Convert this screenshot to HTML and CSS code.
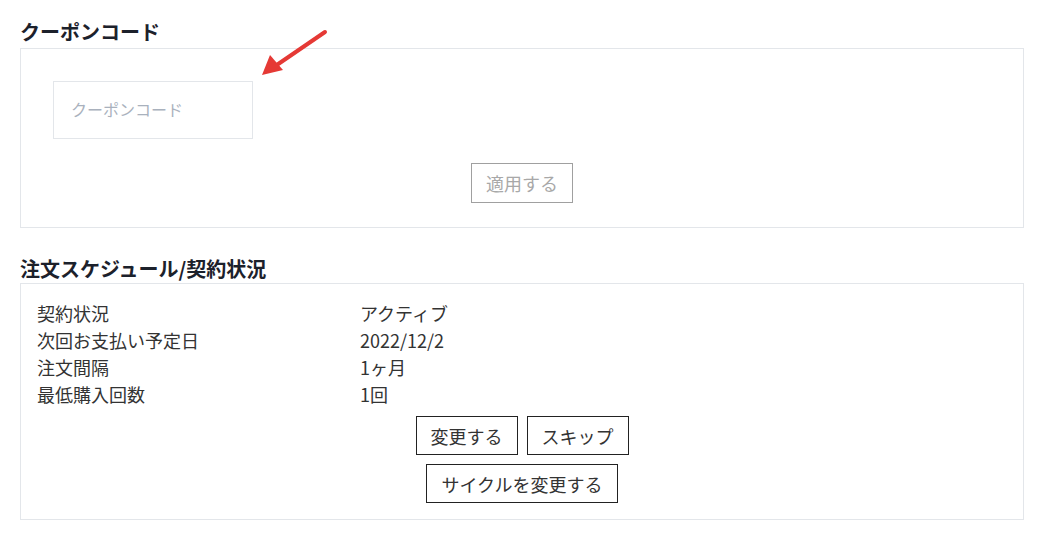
FILE: index.html
```html
<!DOCTYPE html>
<html lang="ja">
<head>
<meta charset="utf-8">
<link rel="stylesheet" href="styles.css">
</head>
<body>
<div class="page">
  <h2 class="title">クーポンコード</h2>
  <div class="box coupon">
    <input class="coupon-input" type="text" placeholder="クーポンコード">
    <div class="center">
      <button class="btn btn-disabled">適用する</button>
    </div>
  </div>

  <h2 class="title title-2">注文スケジュール/契約状況</h2>
  <div class="box schedule">
    <div class="rows">
      <div class="label">契約状況</div><div class="value">アクティブ</div>
      <div class="label">次回お支払い予定日</div><div class="value">2022/12/2</div>
      <div class="label">注文間隔</div><div class="value">1ヶ月</div>
      <div class="label">最低購入回数</div><div class="value">1回</div>
    </div>
    <div class="btn-row">
      <button class="btn">変更する</button>
      <button class="btn">スキップ</button>
    </div>
    <div class="btn-row">
      <button class="btn">サイクルを変更する</button>
    </div>
  </div>

  <svg class="arrow" width="80" height="60" viewBox="0 0 80 60">
    <line x1="69" y1="4" x2="12" y2="43" stroke="#e53935" stroke-width="4" stroke-linecap="round"/>
    <polygon points="6,47 14,27 27,42" fill="#e53935"/>
  </svg>
</div>
</body>
</html>
```

FILE: styles.css
```css
* { box-sizing: border-box; }
html, body { margin: 0; padding: 0; background: #fff; }
body {
  font-family: "Noto Sans CJK JP", "Noto Sans", sans-serif;
  color: #333;
}
.page {
  position: relative;
  margin: 0 23px 0 20px;
  padding-top: 18px;
  padding-bottom: 20px;
}
.title {
  margin: 0 0 2px 0;
  font-size: 20px;
  line-height: 28px;
  font-weight: 700;
  color: #1c212b;
}
.title-2 { margin-top: 27px; margin-bottom: 0; }
.box {
  border: 1px solid #e3e6ea;
  background: #fff;
}
.coupon {
  padding: 32px 32px 24px 32px;
}
.coupon-input {
  display: block;
  width: 200px;
  height: 58px;
  border: 1px solid #e3e6ea;
  padding: 0 17px 2px 17px;
  font-family: inherit;
  font-size: 16px;
  color: #333;
  outline: none;
}
.coupon-input::placeholder { color: #a9b1bd; }
.center {
  display: flex;
  justify-content: center;
  margin-top: 24px;
}
.btn {
  height: 40px;
  padding: 0 14px;
  background: #fff;
  border: 1px solid #222;
  font-family: inherit;
  font-size: 18px;
  line-height: 1;
  color: #333;
  cursor: pointer;
}
.btn-row .btn { height: 39px; }
.btn-disabled {
  border-color: #a0a0a0;
  color: #a8a8a8;
}
.schedule {
  padding: 16px 16px 16px 16px;
}
.rows {
  display: grid;
  grid-template-columns: 323px 1fr;
  font-size: 18px;
  line-height: 27px;
  color: #333;
}
.btn-row {
  display: flex;
  justify-content: center;
  gap: 9px;
  margin-top: 8px;
}
.btn-row + .btn-row { margin-top: 9px; }
.arrow {
  position: absolute;
  left: 236px;
  top: 28px;
}
```
